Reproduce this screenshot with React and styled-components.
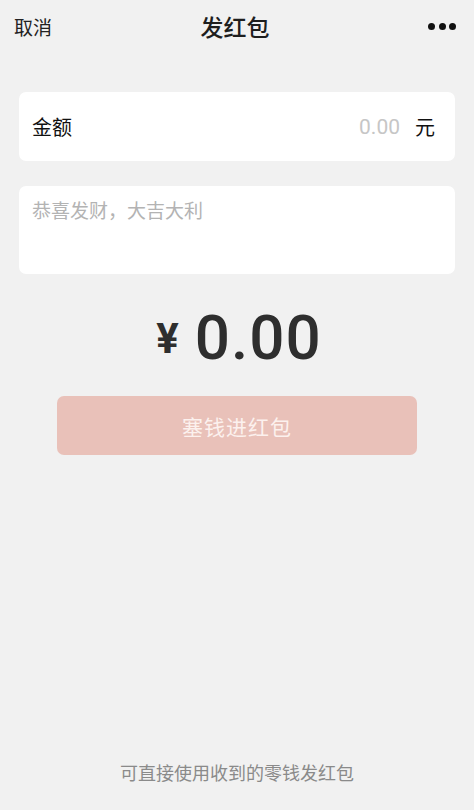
import React from "react";
import styled, { createGlobalStyle } from "styled-components";

const Global = createGlobalStyle`
  html, body { margin: 0; padding: 0; background: #f1f1f1; }
  body { font-family: "Noto Sans CJK SC", "Noto Sans", sans-serif; }
  * { box-sizing: border-box; }
`;

const Page = styled.div`
  width: 474px;
  height: 810px;
  background: #f1f1f1;
  display: flex;
  flex-direction: column;
`;

const NavBar = styled.div`
  height: 52px;
  display: grid;
  grid-template-columns: 1fr auto 1fr;
  align-items: center;
  padding: 0 18px 0 14px;
`;

const NavLeft = styled.span`
  font-size: 19px;
  color: #222;
  justify-self: start;
`;

const NavTitle = styled.span`
  font-size: 23px;
  font-weight: 500;
  color: #1e1e1e;
`;

const Dots = styled.div`
  justify-self: end;
  display: flex;
  gap: 3.5px;
`;

const Dot = styled.span`
  width: 7px;
  height: 7px;
  border-radius: 50%;
  background: #111;
`;

const Content = styled.div`
  flex: 1;
  display: flex;
  flex-direction: column;
  padding: 40px 19px 0;
`;

const Card = styled.div`
  background: #fff;
  border-radius: 7px;
  height: ${(p) => p.$h}px;
  margin-bottom: ${(p) => p.$mb}px;
  padding: 0 20px 0 13px;
  display: flex;
  align-items: ${(p) => (p.$top ? "flex-start" : "center")};
  padding-top: ${(p) => (p.$top ? "10px" : "0")};
`;

const Label = styled.span`
  font-size: 20px;
  color: #111;
  flex: 1;
`;

const AmountInput = styled.span`
  font-family: Roboto, "Noto Sans", sans-serif;
  font-size: 21px;
  color: #c6c6c6;
  margin-right: 15px;
`;

const Unit = styled.span`
  font-size: 20px;
  color: #111;
`;

const Placeholder = styled.span`
  font-size: 19px;
  color: #b3b3b3;
`;

const Total = styled.div`
  display: flex;
  justify-content: center;
  align-items: flex-start;
  gap: 16px;
  margin-top: 33px;
  height: 89px;
  color: #2e2e2e;
  font-family: Roboto, sans-serif;
`;

const Yen = styled.span`
  font-size: 42px;
  font-weight: 700;
  line-height: 1;
  margin-top: 11px;
  margin-left: 4px;
`;

const Big = styled.span`
  font-size: 62px;
  font-weight: 500;
  line-height: 1;
  letter-spacing: 1px;
`;

const Button = styled.div`
  align-self: center;
  width: 360px;
  height: 59px;
  border-radius: 7px;
  background: #e9c1b9;
  color: #fcf1ee;
  font-size: 21px;
  display: flex;
  align-items: center;
  justify-content: center;
  letter-spacing: 1px;
`;

const Footer = styled.div`
  text-align: center;
  font-size: 18px;
  color: #8a8a8a;
  padding-bottom: 25px;
`;

export default function App() {
  return (
    <Page>
      <Global />
      <NavBar>
        <NavLeft>取消</NavLeft>
        <NavTitle>发红包</NavTitle>
        <Dots>
          <Dot />
          <Dot />
          <Dot />
        </Dots>
      </NavBar>
      <Content>
        <Card $h={69} $mb={25}>
          <Label>金额</Label>
          <AmountInput>0.00</AmountInput>
          <Unit>元</Unit>
        </Card>
        <Card $h={88} $mb={0} $top>
          <Placeholder>恭喜发财，大吉大利</Placeholder>
        </Card>
        <Total>
          <Yen>¥</Yen>
          <Big>0.00</Big>
        </Total>
        <Button>塞钱进红包</Button>
      </Content>
      <Footer>可直接使用收到的零钱发红包</Footer>
    </Page>
  );
}
